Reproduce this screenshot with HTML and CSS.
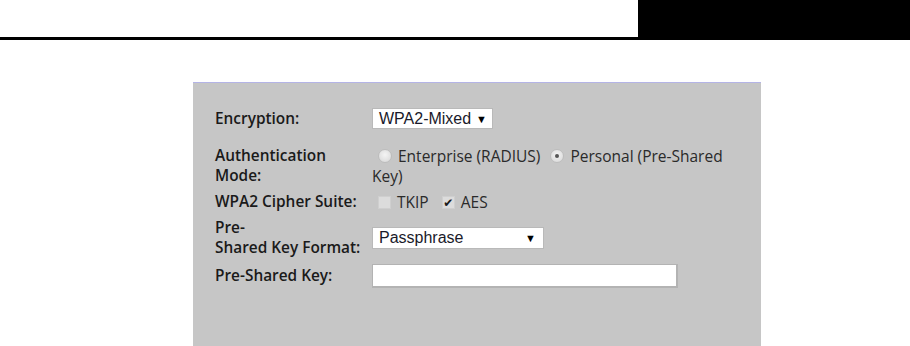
FILE: index.html
```html
<!DOCTYPE html>
<html lang="en">
<head>
    <meta charset="UTF-8">
    <meta name="viewport" content="width=device-width, initial-scale=1.0">
    <title>Wireless Security</title>
    <link rel="stylesheet" href="styles.css">
</head>
<body>
    <div class="header">
        <div class="header-tab"></div>
    </div>

    <div class="panel">
        <div class="row row-first">
            <div class="label">Encryption:</div>
            <div class="field">
                <div class="select select-small">
                    <span>WPA2-Mixed</span>
                    <span class="arrow">&#9660;</span>
                </div>
            </div>
        </div>

        <div class="row">
            <div class="label">Authentication<br>Mode:</div>
            <div class="field text">
                <span class="radio"></span>Enterprise (RADIUS)
                <span class="radio checked"></span>Personal (Pre-Shared Key)
            </div>
        </div>

        <div class="row">
            <div class="label">WPA2 Cipher Suite:</div>
            <div class="field text">
                <span class="check"></span>TKIP
                <span class="check checked">&#10004;</span>AES
            </div>
        </div>

        <div class="row">
            <div class="label">Pre-<br>Shared Key Format:</div>
            <div class="field">
                <div class="select select-wide">
                    <span>Passphrase</span>
                    <span class="arrow">&#9660;</span>
                </div>
            </div>
        </div>

        <div class="row">
            <div class="label">Pre-Shared Key:</div>
            <div class="field">
                <input type="text" class="key-input">
            </div>
        </div>
    </div>
</body>
</html>
```

FILE: styles.css
```css
/* General Reset */
body {
    margin: 0;
    font-family: "Open Sans", "Noto Sans", sans-serif;
    background-color: #ffffff;
    color: #222;
    overflow: hidden;
}

/* Header strip */
.header {
    height: 37px;
    border-bottom: 3px solid #000;
    display: flex;
    justify-content: flex-end;
}

.header-tab {
    width: 272px;
    background-color: #000;
}

/* Settings panel */
.panel {
    margin: 42px 0 0 193px;
    width: 568px;
    min-height: 264px;
    box-sizing: border-box;
    padding: 25px 20px 0 22px;
    background-color: #c6c6c6;
    border-top: 1px solid #b4b4e6;
    display: flex;
    flex-direction: column;
    gap: 6px;
}

.row {
    display: grid;
    grid-template-columns: 157px 1fr;
    align-items: center;
}

.row-first {
    margin-bottom: 11px;
}

.label {
    font-size: 15.4px;
    line-height: 20px;
    color: #1a1a1a;
    font-weight: 600;
}

.text {
    font-size: 15.5px;
    line-height: 20px;
    color: #2a2a2a;
}

/* Fake select boxes */
.select {
    display: flex;
    justify-content: space-between;
    align-items: center;
    box-sizing: border-box;
    height: 21px;
    padding: 0 5px 0 6px;
    background-color: #fff;
    border: 1px solid #b9b9b9;
    font-family: "Liberation Sans", Arial, sans-serif;
    font-size: 16px;
    color: #1a1a2a;
}

.select-small {
    width: 121px;
}

.select-wide {
    width: 172px;
    height: 22px;
    padding-right: 7px;
}

.arrow {
    font-size: 11px;
    color: #000;
}

/* Radio and checkbox marks */
.radio {
    display: inline-block;
    width: 12px;
    height: 12px;
    margin: 0 6px 0 6px;
    border-radius: 50%;
    border: 1px solid #bdbdbd;
    background: radial-gradient(circle at 50% 40%, #f4f4f4, #d6d6d6);
    vertical-align: -1px;
    position: relative;
}

.radio.checked::after {
    content: "";
    position: absolute;
    left: 4px;
    top: 4px;
    width: 4px;
    height: 4px;
    border-radius: 50%;
    background-color: #555;
}

.check {
    display: inline-block;
    width: 11px;
    height: 11px;
    margin: 0 6px 0 6px;
    border: 1px solid #cfcfcf;
    background-color: #dcdcdc;
    vertical-align: -1px;
    font-family: "DejaVu Sans", sans-serif;
    font-size: 12px;
    font-weight: bold;
    line-height: 12px;
    text-align: center;
    color: #1a1a1a;
    overflow: hidden;
}

.check.checked {
    margin-left: 9px;
}

/* Text input */
.key-input {
    display: block;
    box-sizing: border-box;
    width: 306px;
    height: 24px;
    margin: 0;
    border: 2px solid #b3b3b3;
    border-width: 1px 2px 2px 1px;
    background-color: #fff;
}
```
